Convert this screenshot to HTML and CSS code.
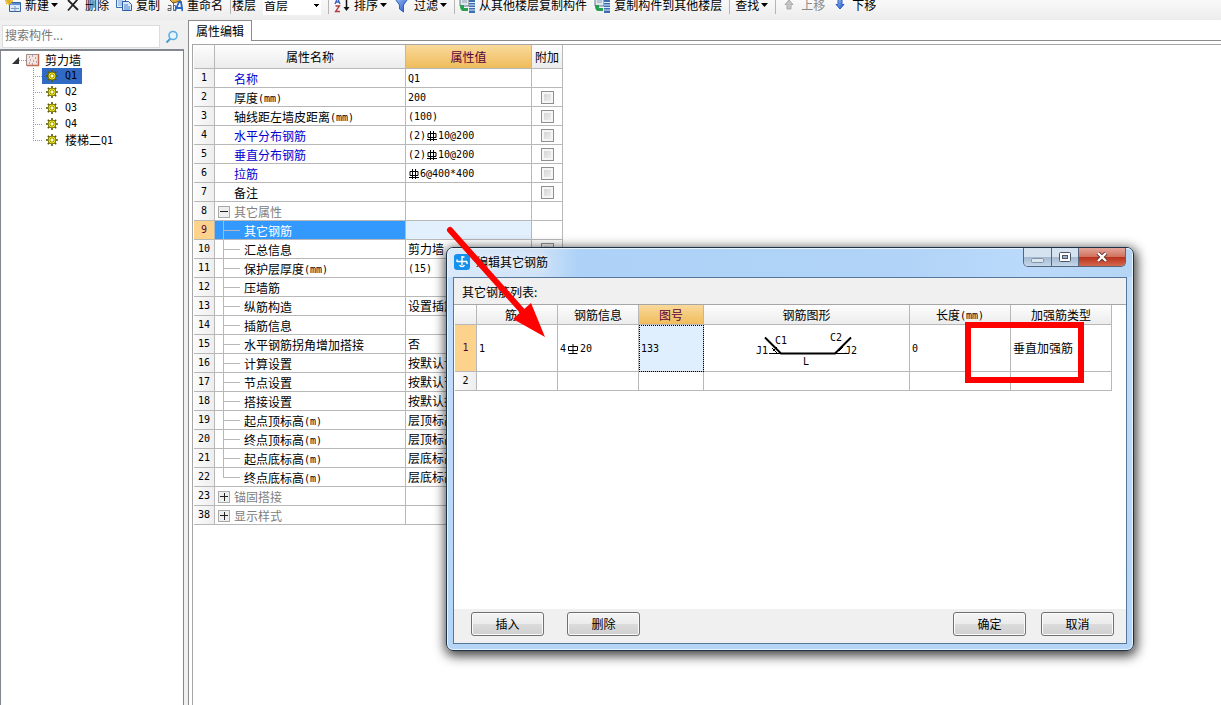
FILE: index.html
```html
<!DOCTYPE html>
<html lang="zh-CN">
<head>
<meta charset="utf-8">
<title>属性编辑</title>
<link rel="stylesheet" href="styles.css">
</head>
<body>
<svg class="defs" width="0" height="0" aria-hidden="true">
  <defs>
    <linearGradient id="blue" x1="0" y1="0" x2="1" y2="1"><stop offset="0" stop-color="#9fc4f8"/><stop offset="1" stop-color="#1b50c4"/></linearGradient>
    <symbol id="gear" viewBox="0 0 12 12">
      <path d="M6 0v12M0 6h12M1.8 1.8l8.400 8.400M10.200 1.800l-8.400 8.400" stroke="#5c5a00" stroke-width="1.600"/>
      <circle cx="6" cy="6" r="4" fill="#f6f02a" stroke="#5c5a00" stroke-width=".8"/>
      <path d="M6 2.500v7M2.500 6h7M3.700 3.700l4.600 4.600M8.300 3.700l-4.600 4.600" stroke="#77720a" stroke-width=".7"/>
      <circle cx="6" cy="6" r="1.200" fill="#fff"/>
    </symbol>
    <symbol id="rebar" viewBox="0 0 12 12">
      <path d="M2 3.500h8v4H2zM4.500 1v10M7.500 1v10M1 9.500h10" fill="none" stroke="#000"/>
    </symbol>
    <symbol id="rebar1" viewBox="0 0 12 12">
      <path d="M1.500 3.500h9v4h-9zM6 1v9.500M1.500 10.500h9" fill="none" stroke="#000"/>
    </symbol>
    <symbol id="caret" viewBox="0 0 7 4"><path d="M0 0h7L3.500 4z" fill="#000"/></symbol>
    <symbol id="floors" viewBox="0 0 16 16">
      <path d="M1 0h9v9H1z" fill="#dfe6ee" stroke="#66788c"/><path d="M3 3h5M3 5h5" stroke="#8fa3b8" stroke-width="1"/>
      <path d="M10 3h6v13h-6z" fill="#3d6fae"/><path d="M10 5.500h6M10 8h6M10 10.500h6M10 13h6" stroke="#dcecff"/>
      <path d="M1 8h4v3h4v3H5c-3 0-4-2-4-6z" fill="#27a050"/>
    </symbol>
  </defs>
</svg>

<header class="toolbar">
  <button class="tool"><svg width="16" height="16" viewBox="0 0 16 16"><path d="M4.500 5.500h11v9h-11z" fill="#dbe9fb" stroke="#35639f"/><path d="M5 6h10v2H5z" fill="#5a8fd6"/><path d="M6 11.500h8M10 9v5" stroke="#7b9cc7"/><path d="M4 0v8M0 4h8M1 1l6 6M7 1L1 7" stroke="#e5b21d" stroke-width="1.500"/></svg>新建<svg class="caret" width="7" height="4"><use href="#caret"/></svg></button>
  <button class="tool"><svg width="16" height="16" viewBox="0 0 16 16"><path d="M3 3l10 10M12.500 2.500L3 13.500" stroke="#222" stroke-width="1.800"/></svg>删除</button>
  <button class="tool"><svg width="16" height="16" viewBox="0 0 16 16"><path d="M.5.500h9v10h-9z" fill="#e4effc" stroke="#3c6cb0"/><path d="M2 4h5M2 6h5M2 8h5" stroke="#7fa5d8"/><path d="M6.500 4.500h6l3 3v6h-9z" fill="#d7e8fc" stroke="#2b5ea9"/><path d="M8 8h4M8 10h6M8 12h6" stroke="#4f82c6"/></svg>复制</button>
  <button class="tool"><svg width="16" height="16" viewBox="0 0 16 16"><path d="M3 3l4-2 2 2 4-3 1 3-4 2-4 1z" fill="#e2ae3e" stroke="#755311"/><path d="M1 8.500h3v5H1v-2h3M6.500 5v8.500h2v-5h-2" fill="none" stroke="#666"/><path d="M8 14l4-9h2l1.500 9M10 11h5" fill="none" stroke="#2866c5" stroke-width="1.800"/></svg>重命名</button>
  <label class="group floor-label" for="floor">楼层</label>
  <select id="floor" class="floor"><option>首层</option></select>
  <div class="group">
    <button class="tool"><svg width="16" height="16" viewBox="0 0 16 16"><path d="M1 7l2.500-6L6 7M2 5h3" fill="none" stroke="#365fc0" stroke-width="1.300"/><path d="M1.500 9h4l-4 5.500h4.500" fill="none" stroke="#b13b42" stroke-width="1.300"/><path d="M12.500 1v10" stroke="#111" stroke-width="1.500"/><path d="M9.500 10h6l-3 4z" fill="#111"/></svg>排序<svg class="caret" width="7" height="4"><use href="#caret"/></svg></button>
    <button class="tool"><svg width="16" height="16" viewBox="0 0 16 16"><path d="M.5 1h14L9.500 8v7l-4-3V8z" fill="url(#blue)" stroke="#2f62bd"/></svg>过滤<svg class="caret" width="7" height="4"><use href="#caret"/></svg></button>
  </div>
  <div class="group tight">
    <button class="tool"><svg width="16" height="16"><use href="#floors"/></svg>从其他楼层复制构件</button>
    <button class="tool"><svg width="16" height="16"><use href="#floors"/></svg>复制构件到其他楼层</button>
  </div>
  <div class="group">
    <button class="tool">查找<svg class="caret" width="7" height="4"><use href="#caret"/></svg></button>
  </div>
  <div class="group">
    <button class="tool" disabled><svg width="16" height="16" viewBox="0 0 16 16"><path d="M8 3l4 4.500h-2V12H6V7.500H4z" fill="#c4c4c4" stroke="#aaa"/></svg>上移</button>
    <button class="tool"><svg width="16" height="16" viewBox="0 0 16 16"><path d="M8 12l4-4.500h-2V2H6v5.500H4z" fill="url(#blue)" stroke="#3261c4"/></svg>下移</button>
  </div>
</header>

<main class="workspace">
  <aside class="side">
    <div class="search">
      <input type="text" aria-label="搜索构件" placeholder="搜索构件...">
      <button class="search-go" aria-label="搜索"><svg width="14" height="14" viewBox="0 0 14 14"><circle cx="8" cy="5.500" r="4" fill="#e6f5ff" stroke="#5aaee0" stroke-width="1.600"/><path d="M5 9l-3.500 3.500" stroke="#4b9bd2" stroke-width="2"/></svg></button>
    </div>
    <div class="tree">
      <div class="root">
        <svg width="7" height="7" viewBox="0 0 7 7"><path d="M7 0v7H0z" fill="#333"/></svg>
        <i class="dots"></i>
        <svg width="14" height="14" viewBox="0 0 14 14"><path d="M.5 1.500h12v11H.5z" fill="#f4e6df" stroke="#a08c86"/><path d="M1 12.500h12M12.500 1v12" stroke="#c46a4c" stroke-width="1.500"/><path d="M3 4h1M6 3h1M9 5h1M4 7h1M7 8h1M10 9h1M3 10h1M6 11h1" stroke="#785ba0"/></svg>
        <span class="root-name">剪力墙</span>
      </div>
      <ul class="leaves">
        <li><span class="leaf on"><svg width="12" height="12"><use href="#gear"/></svg><b class="m">Q1</b></span></li>
        <li><span class="leaf"><svg width="12" height="12"><use href="#gear"/></svg><b class="m">Q2</b></span></li>
        <li><span class="leaf"><svg width="12" height="12"><use href="#gear"/></svg><b class="m">Q3</b></span></li>
        <li><span class="leaf"><svg width="12" height="12"><use href="#gear"/></svg><b class="m">Q4</b></span></li>
        <li><span class="leaf"><svg width="12" height="12"><use href="#gear"/></svg><span>楼梯二<b class="m">Q1</b></span></span></li>
      </ul>
    </div>
  </aside>

  <section class="editor">
    <div class="tabs"><button class="tab">属性编辑</button></div>
    <div class="sheet">
      <table class="grid props">
        <colgroup><col class="c-no"><col class="c-name"><col class="c-value"><col class="c-add"></colgroup>
        <thead><tr><th></th><th>属性名称</th><th class="hot">属性值</th><th>附加</th></tr></thead>
        <tbody>
          <tr><th>1</th><td class="key blue">名称</td><td><b class="m">Q1</b></td><td></td></tr>
          <tr><th>2</th><td class="key">厚度<b class="m">(mm)</b></td><td><b class="m">200</b></td><td class="tick"><input type="checkbox" aria-label="厚度"></td></tr>
          <tr><th>3</th><td class="key">轴线距左墙皮距离<b class="m">(mm)</b></td><td><b class="m">(100)</b></td><td class="tick"><input type="checkbox" aria-label="轴线距左墙皮距离"></td></tr>
          <tr><th>4</th><td class="key blue">水平分布钢筋</td><td><b class="m">(2)</b><svg class="bar" width="12" height="12"><use href="#rebar"/></svg><b class="m">10@200</b></td><td class="tick"><input type="checkbox" aria-label="水平分布钢筋"></td></tr>
          <tr><th>5</th><td class="key blue">垂直分布钢筋</td><td><b class="m">(2)</b><svg class="bar" width="12" height="12"><use href="#rebar"/></svg><b class="m">10@200</b></td><td class="tick"><input type="checkbox" aria-label="垂直分布钢筋"></td></tr>
          <tr><th>6</th><td class="key blue">拉筋</td><td><svg class="bar" width="12" height="12"><use href="#rebar"/></svg><b class="m">6@400*400</b></td><td class="tick"><input type="checkbox" aria-label="拉筋"></td></tr>
          <tr><th>7</th><td class="key">备注</td><td></td><td class="tick"><input type="checkbox" aria-label="备注"></td></tr>
          <tr><th>8</th><td class="fold"><button class="box minus" aria-label="折叠"></button>其它属性</td><td></td><td></td></tr>
          <tr class="current"><th>9</th><td class="sub">其它钢筋</td><td></td><td></td></tr>
          <tr><th>10</th><td class="sub">汇总信息</td><td>剪力墙</td><td class="tick"><input type="checkbox" aria-label="汇总信息"></td></tr>
          <tr><th>11</th><td class="sub">保护层厚度<b class="m">(mm)</b></td><td><b class="m">(15)</b></td><td></td></tr>
          <tr><th>12</th><td class="sub">压墙筋</td><td></td><td></td></tr>
          <tr><th>13</th><td class="sub">纵筋构造</td><td>设置插筋</td><td></td></tr>
          <tr><th>14</th><td class="sub">插筋信息</td><td></td><td></td></tr>
          <tr><th>15</th><td class="sub">水平钢筋拐角增加搭接</td><td>否</td><td></td></tr>
          <tr><th>16</th><td class="sub">计算设置</td><td>按默认计</td><td></td></tr>
          <tr><th>17</th><td class="sub">节点设置</td><td>按默认节</td><td></td></tr>
          <tr><th>18</th><td class="sub">搭接设置</td><td>按默认搭</td><td></td></tr>
          <tr><th>19</th><td class="sub">起点顶标高<b class="m">(m)</b></td><td>层顶标高</td><td></td></tr>
          <tr><th>20</th><td class="sub">终点顶标高<b class="m">(m)</b></td><td>层顶标高</td><td></td></tr>
          <tr><th>21</th><td class="sub">起点底标高<b class="m">(m)</b></td><td>层底标高</td><td></td></tr>
          <tr><th>22</th><td class="sub last">终点底标高<b class="m">(m)</b></td><td>层底标高</td><td></td></tr>
          <tr><th>23</th><td class="fold"><button class="box plus" aria-label="展开"></button>锚固搭接</td><td></td><td></td></tr>
          <tr><th>38</th><td class="fold"><button class="box plus" aria-label="展开"></button>显示样式</td><td></td><td></td></tr>
        </tbody>
      </table>
    </div>
  </section>
</main>

<div class="dialog" role="dialog" aria-labelledby="dlg-title">
  <div class="caption">
    <svg class="logo" width="16" height="16" viewBox="0 0 16 16"><rect width="16" height="16" rx="3" fill="#1590ec"/><path d="M8 2v9M3 7.500h10M8 3h2.500M3 5.500v2.500M13 7.500v2.500M5.500 11c1 2 4 2 5 0" fill="none" stroke="#fff" stroke-width="1.400"/></svg>
    <span id="dlg-title" class="dlg-title">编辑其它钢筋</span>
    <div class="winbtns">
      <button class="min" aria-label="最小化"><svg width="13" height="5" viewBox="0 0 13 5"><rect x=".5" y=".5" width="12" height="4" rx="1" fill="#dce6f0" stroke="#8494a8"/></svg></button>
      <button class="max" aria-label="最大化"><svg width="12" height="10" viewBox="0 0 12 10"><rect x=".5" y=".5" width="11" height="9" rx="1" fill="#fff" stroke="#4b5668"/><rect x="3.500" y="3.500" width="5" height="3" fill="#9db5d0" stroke="#4b5668"/></svg></button>
      <button class="close" aria-label="关闭"><svg width="12" height="10" viewBox="0 0 12 10"><path d="M2 1l8 8M10 1L2 9" stroke="#5c2a2a" stroke-width="4"/><path d="M2 1l8 8M10 1L2 9" stroke="#fff" stroke-width="2.400"/></svg></button>
    </div>
  </div>
  <div class="client">
    <div class="list-label">其它钢筋列表:</div>
    <div class="list">
      <table class="grid bars">
        <colgroup><col class="b-no"><col class="b-id"><col class="b-info"><col class="b-fig"><col class="b-shape"><col class="b-len"><col class="b-type"></colgroup>
        <thead><tr><th></th><th>筋号</th><th>钢筋信息</th><th class="hot">图号</th><th>钢筋图形</th><th>长度<b class="m">(mm)</b></th><th>加强筋类型</th></tr></thead>
        <tbody>
          <tr class="tall"><th class="hot">1</th><td><b class="m">1</b></td><td><b class="m">4</b><svg class="bar" width="14" height="12"><use href="#rebar1"/></svg><b class="m">20</b></td><td class="picked"><b class="m">133</b></td>
            <td class="shape"><svg width="110" height="44" viewBox="0 0 110 44"><path d="M15 11.500L31 27.500h54L101 11.500" fill="none" stroke="#000" stroke-width="2"/><path d="M19 27.500h12M85 27.500h14M23 25l4-4M22 22l5 5M89 25l4-4" fill="none" stroke="#000" stroke-width="1"/><text x="6" y="28">J1</text><text x="25" y="18">C1</text><text x="80" y="15">C2</text><text x="95" y="28">J2</text><text x="53" y="39">L</text></svg></td>
            <td><b class="m">0</b></td><td>垂直加强筋</td></tr>
          <tr><th>2</th><td></td><td></td><td></td><td></td><td></td><td></td></tr>
        </tbody>
      </table>
    </div>
    <div class="actions">
      <button class="push">插入</button><button class="push">删除</button><span class="fill"></span><button class="push">确定</button><button class="push">取消</button>
    </div>
  </div>
</div>

<svg class="marks" width="660" height="170" viewBox="440 220 660 170" aria-hidden="true">
  <path d="M450 230L524 313" stroke="#f00" stroke-width="6" stroke-linecap="round"/>
  <path d="M545 337L513 319L531 303z" fill="#f00"/>
  <rect x="968" y="325" width="113" height="55" fill="none" stroke="#f00" stroke-width="6"/>
</svg>
</body>
</html>
```
FILE: styles.css
```css
* { box-sizing: border-box; }
body {
  margin: 0;
  min-height: 100vh;
  display: flex;
  flex-direction: column;
  overflow: hidden;
  background: #fff;
  color: #000;
  font: 12px/18px "Noto Sans CJK SC", sans-serif;
}
button, input, select { font: inherit; color: inherit; margin: 0; }
svg { display: block; flex: none; }
.defs { position: absolute; }
.m { font: 10px/12px "DejaVu Sans Mono", "Noto Sans CJK SC", monospace; vertical-align: 1px; }

/* Toolbar */
.toolbar {
  display: flex;
  align-items: flex-start;
  gap: 7px;
  height: 20px;
  padding-left: 5px;
  background: linear-gradient(#f9f9f9, #ececec);
  white-space: nowrap;
  line-height: 10px;
}
.tool {
  display: flex;
  align-items: center;
  gap: 4px;
  height: 10px;
  padding: 0;
  border: 0;
  background: none;
}
.tool .caret { margin-left: -2px; }
.tool:disabled { color: #8a8a8a; }
.group {
  display: flex;
  gap: 7px;
  height: 14px;
  padding-left: 5px;
  border-left: 1px solid #b5b5b5;
}
.group.tight { padding-left: 4px; }
.floor-label { padding-left: 1px; }
.floor {
  appearance: none;
  width: 58px;
  height: 15px;
  padding: 0 0 4px 1px;
  border: 0;
  background: linear-gradient(#000, #000) no-repeat 51px 4px / 5px 1px, linear-gradient(#000, #000) no-repeat 52px 5px / 3px 1px, linear-gradient(#000, #000) no-repeat 53px 6px / 1px 1px, #fff;
  line-height: 10px;
}

/* Component tree */
.workspace { flex: 1; display: flex; }
.side {
  width: 188px;
  flex: none;
  display: flex;
  flex-direction: column;
  padding-right: 4px;
  background: #f0f0f0;
}
.search {
  display: flex;
  align-items: center;
  height: 29px;
  padding: 4px 5px 0 2px;
}
.search input {
  flex: 1;
  min-width: 0;
  height: 23px;
  padding: 0 2px 4px;
  border: 1px solid #dcdcdc;
  background: #fff;
}
.search input::placeholder { color: #777; opacity: 1; }
.search-go { padding: 0 0 0 5px; border: 0; background: none; }
.tree {
  flex: 1;
  padding-top: 1px;
  border: solid #828790;
  border-width: 2px 1px 0;
  background: #fff;
}
.root { display: flex; align-items: center; height: 16px; padding-left: 11px; }
.dots { width: 7px; border-top: 1px dotted #999; }
.root-name { padding-left: 5px; }
.leaves { margin: 0; padding: 0 0 0 32px; list-style: none; }
.leaves li {
  display: flex;
  align-items: center;
  height: 16px;
  background:
    linear-gradient(#fff, #fff) no-repeat 9px 0 / 100% 100%,
    repeating-linear-gradient(90deg, #999 0 1px, transparent 1px 2px) no-repeat 0 8px / 9px 1px,
    repeating-linear-gradient(#999 0 1px, transparent 1px 2px) no-repeat 0 0 / 1px 16px;
}
.leaves li:last-child { background-size: 100% 100%, 9px 1px, 1px 8px; }
.leaf {
  display: flex;
  align-items: center;
  gap: 7px;
  height: 16px;
  margin-left: 9px;
  padding: 0 5px 0 4px;
}
.leaf.on { background: #316ac5; }

/* Property editor */
.editor { flex: 1; min-width: 0; display: flex; flex-direction: column; border-left: 1px solid #8c8c8c; }
.tabs { display: flex; height: 21px; }
.tabs::after { content: ""; flex: 1; border-bottom: 1px solid #8c8c8c; }
.tab {
  width: 63px;
  padding: 0 0 1px;
  border: solid #8c8c8c;
  border-width: 1px 1px 0 0;
  background: #fff;
  line-height: 18px;
}
.sheet { flex: 1; margin: 3px 0 0 3px; padding-left: 1px; border: solid #a6a6a6; border-width: 1px 0 0 1px; }
.grid { table-layout: fixed; border-collapse: separate; border-spacing: 0; }
.grid th, .grid td {
  height: 19px;
  padding: 0;
  border: solid #b8b8b8;
  border-width: 0 1px 1px 0;
  font-weight: normal;
  text-align: left;
  white-space: nowrap;
  overflow: hidden;
  line-height: 16px;
}
.grid td { padding: 0 0 1px 2px; }
.grid th { text-align: center; background: linear-gradient(#fdfdfd, #ececec); }
.grid tbody th { font: 10px/16px "DejaVu Sans Mono", monospace; background: linear-gradient(90deg, #fbfbfb, #eee); }
.grid thead .hot { background: linear-gradient(#f9d99a, #efbc5c); color: #5c0038; }
.grid tbody .hot, .grid .current th { background: #fdd38b; color: #5c0038; }
.props { width: 369px; }
.c-no { width: 21px; }
.c-name { width: 191px; }
.c-value { width: 126px; }
.c-add { width: 31px; }
.props thead th { height: 24px; }
.props .key { padding: 1px 0 0 19px; }
.blue { color: #0000d0; }
.grid .bar { display: inline-block; vertical-align: -2px; }
.props .tick { padding: 0; }
.tick input {
  appearance: none;
  display: block;
  width: 13px;
  height: 13px;
  margin: 0 auto;
  border: 1px solid #8e8f8f;
  background: linear-gradient(135deg, #cfcfcf, #f4f4f4);
  box-shadow: inset 0 0 0 2px #f6f6f6;
}
.props .fold { padding: 1px 0 0 3px; color: #808080; }
.box {
  display: inline-block;
  width: 12px;
  height: 12px;
  margin: -2px 4px 0 0;
  padding: 0;
  border: 1px solid #aaa;
  vertical-align: 0;
  background: linear-gradient(#222, #222) no-repeat center / 8px 1px, #eee;
}
.box.plus { background: linear-gradient(#222, #222) no-repeat center / 8px 1px, linear-gradient(#222, #222) no-repeat center / 1px 8px, #eee; }
.props .sub {
  padding: 1px 0 0 29px;
  background: linear-gradient(#b8b8b8, #b8b8b8) no-repeat 8px 9px / 17px 1px, linear-gradient(#b8b8b8, #b8b8b8) no-repeat 8px 0 / 1px 19px;
}
.props .sub.last { background-size: 17px 1px, 1px 9px; }
.current .sub { background-color: #3399ff; color: #fff; }
.current td:nth-child(3) { background: #e2effd; }

/* Dialog */
.dialog {
  position: absolute;
  left: 446px;
  top: 247px;
  width: 688px;
  height: 404px;
  display: flex;
  flex-direction: column;
  padding: 0 6px 6px;
  border: 1px solid #1f3145;
  border-radius: 7px;
  background: linear-gradient(#c5dffa, #b4d5f6);
  box-shadow: inset 0 0 0 1px #e8f3fe, 1px 3px 12px 2px rgba(0, 0, 0, .75);
}
.caption {
  display: flex;
  align-items: center;
  height: 29px;
  margin: 0 -5px;
  padding: 0 0 2px 6px;
  border-radius: 5px 5px 0 0;
  background: linear-gradient(90deg, #dbeafa, #cfe2f7 90px, #aed2f7 130px, #b0d3f7 450px, #bbdafb 580px, #b5d5f5);
  border-top: 1px solid #e8f3fe;
}
.dlg-title { padding-left: 6px; text-shadow: 0 0 6px #fff; }
.winbtns {
  display: flex;
  align-self: flex-start;
  width: 103px;
  height: 19px;
  margin: -1px 6px 0 auto;
  border: 1px solid #56677c;
  border-top: 0;
  border-radius: 0 0 5px 5px;
  overflow: hidden;
}
.winbtns button {
  display: flex;
  align-items: center;
  justify-content: center;
  padding: 0;
  border: 0;
  border-right: 1px solid #56677c;
  background: linear-gradient(#d5e3f1 50%, #a4b9cf 50%, #c4d8ec);
}
.winbtns .min { width: 28px; padding-top: 6px; }
.winbtns .max { width: 27px; }
.winbtns .close { flex: 1; border: 0; background: linear-gradient(#e4a79a, #d0705c 50%, #b8301c 50%, #d4684c); }
.client {
  flex: 1;
  display: flex;
  flex-direction: column;
  border: 1px solid #55779c;
  background: #f0f0f0;
}
.list-label { padding: 5px 0 3px 8px; }
.list { flex: 1; border-top: 1px solid #a6a6a6; background: #fff; padding-left: 1px; }
.bars { width: 657px; }
.b-no { width: 22px; }
.b-id, .b-info { width: 81px; }
.b-fig { width: 65px; }
.b-shape { width: 206px; }
.b-len, .b-type { width: 101px; }
.bars thead th { height: 20px; }
.bars .tall th, .bars .tall td { height: 47px; }
.bars .picked { background: #e0effe; outline: 1px dotted #000; outline-offset: -1px; }
.bars .shape { padding: 0 0 0 46px; }
.shape text { font: 10px "DejaVu Sans Mono", monospace; }
.actions {
  display: flex;
  align-items: flex-start;
  height: 34px;
  gap: 15px;
  padding: 3px 12px 0 17px;
}
.push {
  width: 73px;
  height: 24px;
  padding: 0 0 1px;
  border: 1px solid #707070;
  border-radius: 3px;
  background: linear-gradient(#f4f4f4, #ebebeb 50%, #dcdcdc 50%, #cfcfcf);
  box-shadow: inset 0 0 0 1px #fbfbfb;
}
.push:nth-child(2) { margin-left: 8px; }
.fill { flex: 1; }

/* Markup drawn over the window */
.marks { position: absolute; left: 440px; top: 220px; pointer-events: none; }
```
